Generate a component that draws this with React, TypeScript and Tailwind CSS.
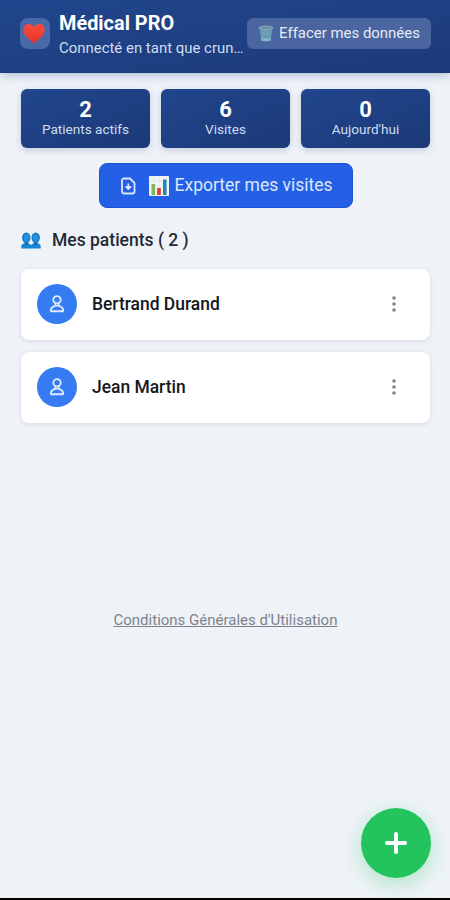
import React from "react";

function Heart() {
  return (
    <svg width="22" height="20" viewBox="0 0 22 20">
      <defs>
        <linearGradient id="heart" x1="0" y1="0" x2="0" y2="1">
          <stop offset="0" stopColor="#fb4a3c" />
          <stop offset="1" stopColor="#e5352c" />
        </linearGradient>
      </defs>
      <path
        d="M11 3.2C9.800.9 7.800 0 5.900 0 2.700 0 .3 2.400.3 5.800c0 5.800 6.200 9.500 10.700 14C15.500 15.300 21.700 11.600 21.700 5.800 21.700 2.400 19.300 0 16.100 0 14.200 0 12.200.9 11 3.200z"
        fill="url(#heart)"
      />
    </svg>
  );
}

function Bin() {
  return (
    <svg width="16" height="17" viewBox="0 0 16 17">
      <path d="M1.500 3h13l-1.600 12.200c-.2 1-9.600 1-9.800 0z" fill="#6698b6" />
      <path d="M3 5.500l10 7M13 5.500l-10 7M6 4.500l6.800 5M10 4.500l-6.800 5" stroke="#79a6c0" strokeWidth=".7" />
      <path d="M3.100 13.200h9.800l-.3 2.200c-1 1-8.200 1-9.200 0z" fill="#83b5cc" />
      <ellipse cx="8" cy="2.700" rx="7.400" ry="2.200" fill="#85a9b8" />
      <ellipse cx="8" cy="2.700" rx="5.800" ry="1.200" fill="#6a90a6" />
    </svg>
  );
}

function BarChart() {
  return (
    <svg width="20" height="20" viewBox="0 0 20 20">
      <rect width="20" height="20" rx=".8" fill="#f1f5f4" />
      <path d="M5 0v20M10 0v20M15 0v20M0 5h20M0 10h20M0 15h20" stroke="#dfe6e6" strokeWidth=".6" />
      <rect x="2.500" y="8" width="3.600" height="11" fill="#82b956" />
      <rect x="8.200" y="12" width="3.600" height="7" fill="#e3372f" />
      <rect x="14" y="3.500" width="3.600" height="15.500" fill="#2287bd" />
    </svg>
  );
}

function FileDown() {
  return (
    <svg width="15" height="18" viewBox="0 0 15 18" fill="none" stroke="#dce7ff" strokeWidth="1.800" strokeLinejoin="round" strokeLinecap="round">
      <path d="M3 1.500h6L13.500 6v8.500a2 2 0 0 1-2 2H3a2 2 0 0 1-2-2v-11a2 2 0 0 1 2-2z" />
      <path d="M7.300 7v4M4.900 9.800h4.800l-2.400 2.400z" fill="#dce7ff" strokeWidth="1.600" />
    </svg>
  );
}

function People() {
  return (
    <svg width="20" height="17" viewBox="0 0 20 17">
      <g fill="#1686d2">
        <path d="M.3 16.500v-2c0-2.200 1.800-3.400 5.100-3.500 3.200.1 4.800 1.300 4.800 3.500v2z" />
        <path d="M9.800 16.500v-2c0-2.200 1.700-3.400 4.900-3.500 3.300.1 5 1.300 5 3.500v2z" />
      </g>
      <path d="M3.800 9h3.100v3c-.8.9-2.300.9-3.100 0zM13.100 9h3.100v3c-.8.9-2.300.9-3.100 0z" fill="#0869a9" />
      <ellipse cx="5.300" cy="5.700" rx="4.200" ry="5.200" fill="#1474b8" />
      <ellipse cx="14.700" cy="5.700" rx="4.200" ry="5.200" fill="#1474b8" />
      <ellipse cx="5.500" cy="6" rx="3" ry="4" fill="#2192df" />
      <ellipse cx="14.500" cy="6" rx="3" ry="4" fill="#2192df" />
    </svg>
  );
}

function Person() {
  return (
    <svg width="16" height="18" viewBox="0 0 16 18" fill="none" stroke="#dceaff" strokeWidth="1.900" strokeLinejoin="round">
      <circle cx="8" cy="4.800" r="3.700" />
      <path d="M6.200 8.200v2M9.800 8.200v2" strokeWidth="1.500" />
      <path d="M4.800 11.300c2-.9 4.400-.9 6.400 0 1.700.8 2.900 2 3 3.700.1.900-.3 1.300-1.200 1.300H3c-.9 0-1.300-.4-1.200-1.300.1-1.700 1.300-2.900 3-3.700z" />
    </svg>
  );
}

const stats = [
  { value: 2, label: "Patients actifs" },
  { value: 6, label: "Visites" },
  { value: 0, label: "Aujourd'hui" },
];

const patients = ["Bertrand Durand", "Jean Martin"];

export default function App() {
  return (
    <div className="relative flex h-[900px] w-[450px] flex-col overflow-hidden border-b-2 border-black bg-[#eff3f8] font-[Roboto,sans-serif]">
      <header className="flex h-[73px] shrink-0 items-start border-b border-[#173b7d] bg-linear-to-br from-[#21468d] to-[#1c3a79] pl-[20px] pr-[19px] shadow-[0_2px_10px_rgba(30,58,120,0.3)]">
        <div className="mt-[18px] flex h-[31px] w-[30px] shrink-0 items-center justify-center rounded-lg bg-[#4869a8] pr-[2px]">
          <Heart />
        </div>
        <div className="ml-[9px] mt-[11px] w-[188px] shrink-0 whitespace-nowrap">
          <h1 className="text-[19.9px] font-bold leading-[25px] text-white">Médical PRO</h1>
          <p className="text-[14.95px] leading-[25px] text-[#cfdcf1]">Connecté en tant que crun…</p>
        </div>
        <button className="mt-[18px] flex h-[31px] w-[184px] shrink-0 items-center justify-center gap-[5px] whitespace-nowrap rounded-md border border-[#48639f] bg-[#4a659f] text-[14.95px] text-[#e4ebf8]">
          <Bin />
          <span>Effacer mes données</span>
        </button>
      </header>

      <main className="flex flex-col pl-[21px] pr-5 pt-4">
        <section className="grid grid-cols-3 gap-[11px]">
          {stats.map((s) => (
            <div
              key={s.label}
              className="flex h-[59px] flex-col items-center rounded-md bg-linear-to-br from-[#21468d] to-[#1b3977] pt-[9px] shadow-[0_2px_7px_rgba(30,58,120,0.22)]"
            >
              <span className="text-[22px] font-bold leading-[24px] text-white">{s.value}</span>
              <span className="text-[13.6px] leading-[14px] text-[#cfdcf1]">{s.label}</span>
            </div>
          ))}
        </section>

        <button className="mt-[15px] flex h-[45px] w-[254px] items-center self-center rounded-lg border border-[#1d54d2] bg-[#2460e6] pl-[21px] text-[#dce7ff]">
          <FileDown />
          <span className="ml-[13px]">
            <BarChart />
          </span>
          <span className="ml-[6px] whitespace-nowrap text-[17.5px]">Exporter mes visites</span>
        </button>

        <h2 className="mt-[20px] flex h-6 items-center gap-[11px] text-[17.5px] font-medium text-[#242a35]">
          <People />
          <span>Mes patients ( 2 )</span>
        </h2>

        <ul className="mt-[17px] flex flex-col gap-[12px]">
          {patients.map((name) => (
            <li
              key={name}
              className="flex h-[71px] items-center rounded-lg bg-white pb-px pl-4 pr-[34px] shadow-[0_1px_4px_rgba(30,40,70,0.13)]"
            >
              <div className="flex h-10 w-10 items-center justify-center rounded-full bg-[#357bf1]">
                <Person />
              </div>
              <span className="ml-[15px] flex-1 text-[17.45px] font-medium text-[#15171b]">{name}</span>
              <svg width="4" height="18" viewBox="0 0 4 18" fill="#858585">
                <circle cx="2" cy="3" r="1.800" />
                <circle cx="2" cy="9" r="1.800" />
                <circle cx="2" cy="15" r="1.800" />
              </svg>
            </li>
          ))}
        </ul>

        <a className="mt-[187px] self-center whitespace-nowrap text-[15px] leading-[20px] text-[#7d838c] underline decoration-1 underline-offset-1">
          Conditions Générales d'Utilisation
        </a>
      </main>

      <button className="absolute bottom-[20px] right-[19px] flex h-[70px] w-[70px] items-center justify-center rounded-full bg-[#23c45e] shadow-[0_6px_22px_rgba(34,197,94,0.32)]">
        <svg width="24" height="24" viewBox="0 0 24 24" stroke="#fff" strokeWidth="4" strokeLinecap="round">
          <path d="M12 3v18M3 12h18" />
        </svg>
      </button>
    </div>
  );
}
